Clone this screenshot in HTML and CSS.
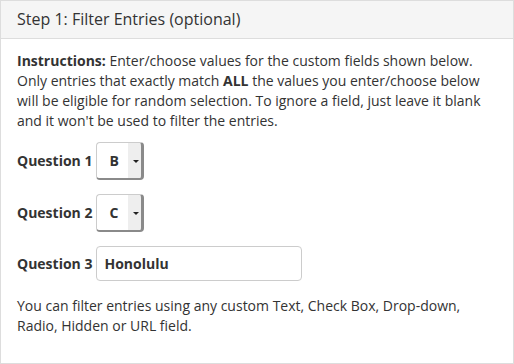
FILE: index.html
```html
<!DOCTYPE html>
<html lang="en">
<head>
	<meta charset="UTF-8">
	<title>Filter Entries</title>
	<link rel="stylesheet" href="styles.css">
</head>
<body>
	<div class="panel">
		<div class="panelHead">Step 1: Filter Entries (optional)</div>
		<div class="panelBody">
			<p class="intro"><strong>Instructions:</strong> Enter/choose values for the custom fields shown below. Only entries that exactly match <strong>ALL</strong> the values you enter/choose below will be eligible for random selection. To ignore a field, just leave it blank and it won't be used to filter the entries.</p>
			<div class="fieldRow">
				<label class="fieldLabel">Question 1</label>
				<span class="selectWrap">
					<select class="pick">
						<option>B</option>
					</select>
				</span>
			</div>
			<div class="fieldRow">
				<label class="fieldLabel">Question 2</label>
				<span class="selectWrap">
					<select class="pick">
						<option>C</option>
					</select>
				</span>
			</div>
			<div class="fieldRow">
				<label class="fieldLabel">Question 3</label>
				<input type="text" class="textField" value="Honolulu">
			</div>
			<p class="note">You can filter entries using any custom Text, Check Box, Drop-down, Radio, Hidden or URL field.</p>
		</div>
	</div>
</body>
</html>
```

FILE: styles.css
```css
* {
	padding: 0;
	margin: 0;
	box-sizing: border-box;
}
body {
	font-family: "Open Sans", "Liberation Sans", sans-serif;
	font-size: 14px;
	line-height: 20px;
	color: #333;
	background: #fff;
}
/* panel */
.panel {
	width: 514px;
	height: 364px;
	border: 1px solid #ddd;
}
.panelHead {
	background: #f5f5f5;
	border-bottom: 1px solid #ddd;
	padding: 8px 16px;
	font-size: 16px;
	line-height: 21px;
}
.panelBody {
	padding: 12px 16px 0;
}
.intro {
	margin-bottom: 11px;
}
.intro strong {
	font-weight: 700;
}
/* form rows */
.fieldRow {
	display: flex;
	align-items: center;
	gap: 4px;
	margin-bottom: 14px;
}
.fieldLabel {
	font-weight: 700;
}
.selectWrap {
	position: relative;
	display: block;
	width: 48px;
	height: 38px;
}
.pick {
	-webkit-appearance: none;
	appearance: none;
	display: block;
	width: 100%;
	height: 100%;
	padding-left: 12px;
	border: 1px solid #ccc;
	border-right: 3px solid #8a8a8a;
	border-bottom: 2px solid #8a8a8a;
	border-radius: 4px;
	font-family: inherit;
	font-size: 14px;
	font-weight: 700;
	color: #333;
	background: linear-gradient(to right, #fff 31px, #eee 31px);
	outline: none;
}
/* little arrow over the grey button */
.selectWrap:after {
	content: '';
	position: absolute;
	top: 18px;
	left: 37px;
	border-left: 3px solid transparent;
	border-right: 3px solid transparent;
	border-top: 3px solid #222;
	pointer-events: none;
}
.textField {
	width: 206px;
	height: 35px;
	padding: 0 7px;
	border: 1px solid #ccc;
	border-radius: 4px;
	font-family: inherit;
	font-size: 14px;
	font-weight: 700;
	color: #333;
	outline: none;
}
.note {
	margin-top: 15px;
}
```
